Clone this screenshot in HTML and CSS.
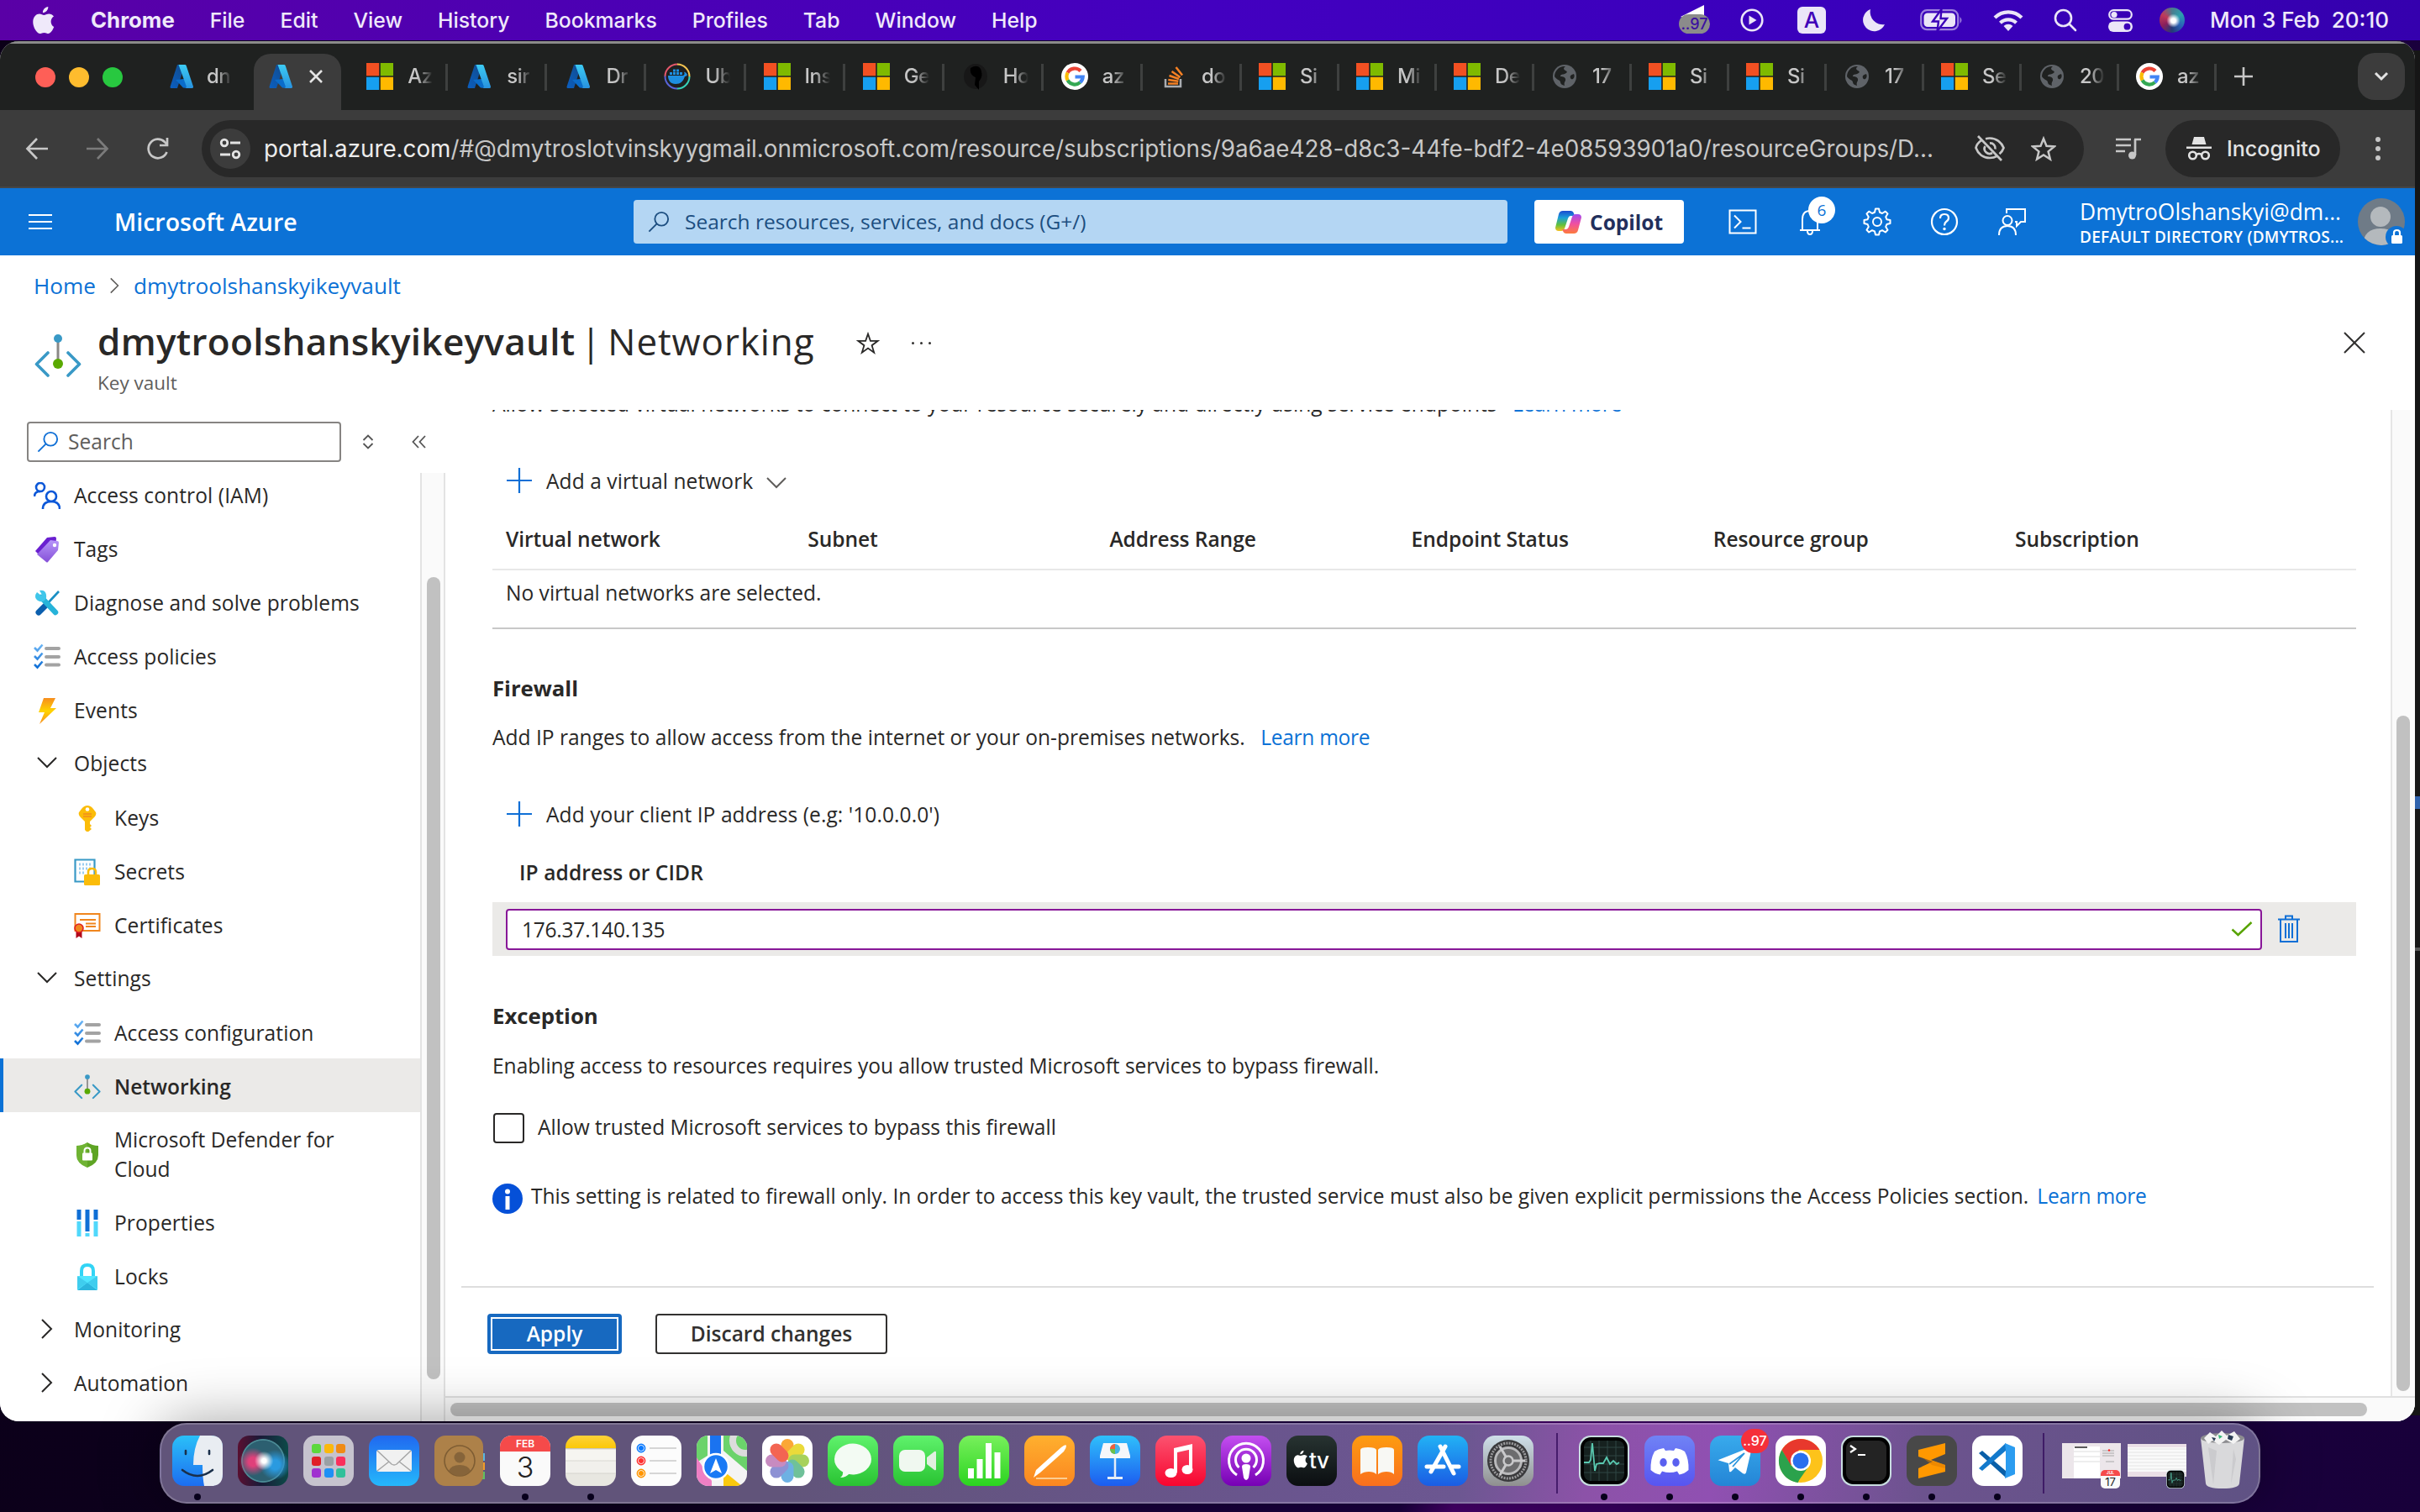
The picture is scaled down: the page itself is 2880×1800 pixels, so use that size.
FILE: index.html
```html
<!DOCTYPE html>
<html lang="en">
<head>
<meta charset="utf-8">
<title>dmytroolshanskyikeyvault - Microsoft Azure</title>
<link rel="stylesheet" href="styles.css">
</head>
<body>
<svg class="defs" width="0" height="0" aria-hidden="true">
  <defs>
    <linearGradient id="gAzA" x1="0" y1="1" x2="1" y2="0"><stop offset="0" stop-color="#0b5fc0"/><stop offset="1" stop-color="#114a8b"/></linearGradient>
    <linearGradient id="gAzB" x1="0" y1="0" x2="0" y2="1"><stop offset="0" stop-color="#3ccbf4"/><stop offset="1" stop-color="#2892df"/></linearGradient>
    <linearGradient id="gTag" x1="0" y1="0" x2="0" y2="1"><stop offset="0" stop-color="#b796f9"/><stop offset="1" stop-color="#8550d8"/></linearGradient>
    <linearGradient id="gBolt" x1="0" y1="0" x2="0" y2="1"><stop offset="0" stop-color="#f78d1e"/><stop offset=".5" stop-color="#ffd400"/><stop offset="1" stop-color="#f78d1e"/></linearGradient>
    <linearGradient id="gChk" x1="0" y1="0" x2="0" y2="1"><stop offset="0" stop-color="#6bb5f5"/><stop offset="1" stop-color="#0f6fd6"/></linearGradient>
    <linearGradient id="gCop1" x1="0" y1="0" x2="0" y2="1"><stop offset="0" stop-color="#1b4bd1"/><stop offset=".35" stop-color="#1ba0d8"/><stop offset=".7" stop-color="#63c13a"/><stop offset="1" stop-color="#f6c021"/></linearGradient>
    <linearGradient id="gCop2" x1="0" y1="0" x2="0" y2="1"><stop offset="0" stop-color="#a24bf0"/><stop offset=".5" stop-color="#f04fa0"/><stop offset="1" stop-color="#fd7b3c"/></linearGradient>
    <symbol id="azure" viewBox="0 0 32 32"><path fill="url(#gAzA)" d="M11 2h9L11 30H4.500Q2 30 2.600 28Z"/><path fill="#0a6cc9" d="M9 20l9 9.500 6 .5-5-11Z"/><path fill="url(#gAzB)" d="M12.500 2H20q1.300 0 1.800 1.400L30 28q.5 2-1.500 2H20.500q1.800-.5 1.200-2.500Z"/></symbol>
    <symbol id="ms" viewBox="0 0 32 32"><path fill="#f25022" d="M0 0h15.200v15.200H0z"/><path fill="#7fba00" d="M16.800 0H32v15.200H16.800z"/><path fill="#169ff0" d="M0 16.800h15.200V32H0z"/><path fill="#ffb900" d="M16.800 16.800H32V32H16.800z"/></symbol>
    <symbol id="google" viewBox="0 0 32 32"><circle cx="16" cy="16" r="16" fill="#fff"/><g fill="none" stroke-width="4.200"><path stroke="#ea4335" d="M23 9.500A9.600 9.600 0 0 0 7.600 11.500"/><path stroke="#fbbc05" d="M7.600 11.500a9.600 9.600 0 0 0 0 9"/><path stroke="#34a853" d="M7.600 20.500A9.600 9.600 0 0 0 22.500 23"/><path stroke="#4285f4" d="M22.500 23a9.600 9.600 0 0 0 3.200-6.500H16.500"/></g></symbol>
    <symbol id="globe" viewBox="0 0 32 32"><circle cx="16" cy="16" r="14" fill="#5f6368"/><path fill="#1f2120" d="M17 4c-3 2-2 4 0 5 3 1 2 3-1 4-2 1-5 0-5 3 3 0 7 1 6 5-1 2-2 3-1 6-3-1-5-2-5-4 0-3-5-3-7-7C4 9 10 3 17 4ZM27 13c-3 1-5 2-4 5 1 2 2 1 3 1 2-2 2-4 1-6Z"/></symbol>
    <symbol id="docker" viewBox="0 0 32 32"><circle cx="16" cy="16" r="14.500" fill="none" stroke="#e5576b" stroke-width="2" stroke-dasharray="23 100" transform="rotate(180 16 16)"/><circle cx="16" cy="16" r="14.500" fill="none" stroke="#f5c451" stroke-width="2" stroke-dasharray="23 100" transform="rotate(-90 16 16)"/><circle cx="16" cy="16" r="14.500" fill="none" stroke="#36d0b8" stroke-width="2" stroke-dasharray="23 100"/><circle cx="16" cy="16" r="14.500" fill="none" stroke="#5864d8" stroke-width="2" stroke-dasharray="23 100" transform="rotate(90 16 16)"/><path fill="#1d8fe0" d="M5 15h18c2-1 2-3 1-4 2-1 3 2 4 3-1 2-3 2-3 2-2 6-5 9-11 9-6 0-9-4-9-10ZM7 11h3v3H7zM11 11h3v3h-3zM15 11h3v3h-3zM19 11h3v3h-3zM11 7.500h3v3h-3zM15 7.500h3v3h-3z"/></symbol>
    <symbol id="hashi" viewBox="0 0 32 32"><ellipse cx="16" cy="16" rx="14" ry="15" fill="#171717"/><path fill="#000" d="M10 6q8-5 12 1c3 8 1 11-2 15v10l-5-6 1-9c-5-2-7-6-6-11Z"/></symbol>
    <symbol id="so" viewBox="0 0 32 32"><path fill="none" stroke="#a9adb1" stroke-width="2.500" d="M6 19v9h18v-9"/><path stroke="#f48024" stroke-width="2.600" d="M9 24.500h12M9.300 20l12 1.800M10.500 15l11.500 4M13.500 10l10 7M18.500 5l7.500 9.500"/></symbol>
    <symbol id="policies" viewBox="0 0 32 32"><path stroke="#a3a3a3" stroke-width="4" stroke-linecap="round" d="M15 6h15M15 16h15M15 25.500h15"/><path fill="none" stroke="url(#gChk)" stroke-width="2.600" d="M1 5l3.500 3.500 6-7M1 15l3.500 3.500 6-7M1 25l3.500 3.500 6-7"/></symbol>
    <symbol id="net" viewBox="0 0 56 56"><path stroke="#8a8886" stroke-width="3" d="M28 8v28"/><circle cx="28" cy="7" r="5" fill="#3999c6"/><circle cx="28" cy="37" r="6" fill="#59a900"/><path fill="none" stroke="#3999c6" stroke-width="3.600" stroke-linecap="round" stroke-linejoin="round" d="M16 24L2.500 37.500 16 51M40 24l13.500 13.500L40 51"/></symbol>
    <symbol id="down" viewBox="0 0 24 14"><path fill="none" stroke="currentColor" stroke-width="2" d="M1 1l11 11L23 1"/></symbol>
    <symbol id="right" viewBox="0 0 14 24"><path fill="none" stroke="currentColor" stroke-width="2" d="M1 1l11 11L1 23"/></symbol>
    <symbol id="plus" viewBox="0 0 30 30"><path fill="none" stroke="#0f6fd6" stroke-width="2.200" d="M15 0v30M0 15h30"/></symbol>
    <symbol id="mag" viewBox="0 0 28 28"><g fill="none" stroke="currentColor" stroke-width="2"><circle cx="17.500" cy="10.500" r="8.500"/><path d="M11.500 16.500L1.500 26.500"/></g></symbol>
    <symbol id="apple" viewBox="0 0 26 32"><path fill="currentColor" d="M18 1c.3 3.500-2.700 6.800-6 6.700C11.700 4.500 14.800 1.200 18 1ZM24.500 23.500C23 27.500 20.500 31 18.200 31c-1.800 0-2.500-1-4.700-1s-3 1-4.700 1C5.500 31 1 24 1 18c0-6 4-9 7.200-9 2 0 3.700 1.300 5.100 1.300 1.300 0 3.400-1.500 5.900-1.400 1.600.1 3.800.8 5.100 2.800-4.600 2.800-3.900 9.700.2 11.800Z"/></symbol>
    <symbol id="pulse" viewBox="0 0 60 60"><rect width="60" height="60" rx="14" fill="#c9dde0"/><rect x="2" y="2" width="56" height="56" rx="12.500" fill="#000"/><rect x="6" y="6" width="48" height="48" rx="8" fill="#16211f"/><path stroke="#2f4744" stroke-width="1" d="M14 6v48M24 6v48M34 6v48M44 6v48M6 14h48M6 24h48M6 34h48M6 44h48"/><path fill="none" stroke="#59c9b0" stroke-width="1.800" d="M6 32h6l2-3 2-20 3 33 2-8 4-1 4 0 4-7 4 8 4-4 4 4 3-2"/></symbol>
  </defs>
</svg>

<div class="desktop">
  <div class="behind"><i class="behind-mark"></i><i class="behind-line"></i></div>

  <header class="menubar">
    <nav class="menus">
      <svg class="apple" width="28" height="34"><use href="#apple"/></svg>
      <b>Chrome</b><span>File</span><span>Edit</span><span>View</span><span>History</span><span>Bookmarks</span><span>Profiles</span><span>Tab</span><span>Window</span><span>Help</span>
    </nav>
    <div class="status">
      <div class="st-tg"><svg width="37" height="36" viewBox="0 0 37 36"><path fill="#fff" d="M30 0L2 14l28 6Z"/><rect x="0" y="11" width="37" height="23" rx="11.500" fill="#8b8b8b"/></svg><em>..97</em></div>
      <svg class="st-play" width="28" height="28" viewBox="0 0 28 28"><circle cx="14" cy="14" r="12.300" fill="none" stroke="#ebe5f8" stroke-width="2.600"/><path fill="#ebe5f8" d="M10.500 8.500v11l9-5.500Z"/></svg>
      <div class="st-a">A</div>
      <svg class="st-moon" width="27" height="28" viewBox="0 0 27 28"><path fill="#ebe5f8" d="M9 1A15 15 0 0 0 26 19 13.500 13.500 0 1 1 9 1Z"/></svg>
      <svg class="st-bat" width="52" height="26" viewBox="0 0 52 26"><rect x="1.200" y="1.200" width="44" height="23" rx="7" fill="none" stroke="#9d80dd" stroke-width="2.200"/><rect x="4.500" y="4.500" width="37.500" height="16.500" rx="4.500" fill="#ebe5f8"/><path fill="#9d80dd" d="M47.500 9q4 4 0 8Z"/><path fill="#ebe5f8" stroke="#3b00b8" stroke-width="2.400" d="M25.500 0L15 14.500h7L20.500 26 32 11h-7.500Z"/></svg>
      <svg class="st-wifi" width="36" height="26" viewBox="0 0 36 26"><g fill="none" stroke="#ebe5f8" stroke-width="4.200"><path d="M2 10a22.500 22.500 0 0 1 32 0"/><path d="M8.500 16.300a13.500 13.500 0 0 1 19 0"/></g><path fill="#ebe5f8" d="M12.500 20a8 8 0 0 1 11 0L18 26Z"/></svg>
      <svg class="st-mag" width="28" height="28" viewBox="0 0 28 28"><g fill="none" stroke="#ebe5f8" stroke-width="2.600" stroke-linecap="round"><circle cx="11.500" cy="11.500" r="9.500"/><path d="M18.500 18.500L26 26"/></g></svg>
      <svg class="st-cc" width="29" height="27" viewBox="0 0 29 27"><rect x="1.200" y="1.200" width="26.600" height="10.500" rx="5.200" fill="none" stroke="#ebe5f8" stroke-width="2.200"/><circle cx="7" cy="6.500" r="3.600" fill="#ebe5f8"/><rect x="0" y="14.500" width="29" height="12.500" rx="6.200" fill="#ebe5f8"/><circle cx="22.500" cy="20.700" r="3.900" fill="#3b00b8"/></svg>
      <i class="st-siri"></i>
      <span class="date">Mon 3 Feb&nbsp; 20:10</span>
    </div>
  </header>

  <main class="window">
    <div class="tabstrip">
      <div class="lights"><i class="red"></i><i class="yel"></i><i class="grn"></i></div>
      <div class="tab nosep"><svg><use href="#azure"/></svg><span>dn</span></div>
      <div class="tab active"><svg><use href="#azure"/></svg><svg class="tab-x" viewBox="0 0 16 16"><path stroke="#e3e3e3" stroke-width="2.600" d="M1 1l14 14M15 1L1 15"/></svg></div>
      <div class="tab"><svg><use href="#ms"/></svg><span>Az</span></div>
      <div class="tab"><svg><use href="#azure"/></svg><span>sir</span></div>
      <div class="tab"><svg><use href="#azure"/></svg><span>Dr</span></div>
      <div class="tab"><svg><use href="#docker"/></svg><span>Ub</span></div>
      <div class="tab"><svg><use href="#ms"/></svg><span>Ins</span></div>
      <div class="tab"><svg><use href="#ms"/></svg><span>Ge</span></div>
      <div class="tab"><svg><use href="#hashi"/></svg><span>Ho</span></div>
      <div class="tab"><svg><use href="#google"/></svg><span>az</span></div>
      <div class="tab"><svg><use href="#so"/></svg><span>do</span></div>
      <div class="tab narrow"><svg><use href="#ms"/></svg><span>Si</span></div>
      <div class="tab narrow"><svg><use href="#ms"/></svg><span>Mi</span></div>
      <div class="tab narrow"><svg><use href="#ms"/></svg><span>De</span></div>
      <div class="tab narrow"><svg><use href="#globe"/></svg><span>17</span></div>
      <div class="tab narrow"><svg><use href="#ms"/></svg><span>Si</span></div>
      <div class="tab narrow"><svg><use href="#ms"/></svg><span>Si</span></div>
      <div class="tab narrow"><svg><use href="#globe"/></svg><span>17</span></div>
      <div class="tab narrow"><svg><use href="#ms"/></svg><span>Se</span></div>
      <div class="tab narrow"><svg><use href="#globe"/></svg><span>20</span></div>
      <div class="tab narrow"><svg><use href="#google"/></svg><span>az</span></div>
      <svg class="newtab" viewBox="0 0 22 22"><path stroke="#c7c7c7" stroke-width="2.600" d="M11 0v22M0 11h22"/></svg>
      <div class="tabmenu"><svg width="18" height="12" viewBox="0 0 18 12"><path fill="none" stroke="#e3e3e3" stroke-width="3" d="M2 2l7 7 7-7"/></svg></div>
    </div>

    <div class="toolbar">
      <svg class="tb-back" width="28" height="28" viewBox="0 0 28 28"><path fill="none" stroke="#c7c7c7" stroke-width="2.700" d="M27 14H3M14 2L2.500 14 14 26"/></svg>
      <svg class="tb-fwd" width="28" height="28" viewBox="0 0 28 28"><path fill="none" stroke="#7b7b7b" stroke-width="2.700" d="M1 14h24M14 2l11.500 12L14 26"/></svg>
      <svg class="tb-rel" width="28" height="28" viewBox="0 0 28 28"><path fill="none" stroke="#c7c7c7" stroke-width="2.700" d="M24.500 18A11.300 11.300 0 1 1 22 6l2.500 3"/><path fill="none" stroke="#c7c7c7" stroke-width="2.700" d="M25 1v9h-9"/></svg>
      <div class="omnibox">
        <div class="site"><svg width="26" height="26" viewBox="0 0 26 26"><g fill="none" stroke="#e3e3e3" stroke-width="2.800"><circle cx="6" cy="6" r="3.800"/><path d="M13 6h12M1 20h12"/><circle cx="20" cy="20" r="3.800"/></g></svg></div>
        <p class="url"><b>portal.azure.com</b>/#@dmytroslotvinskyygmail.onmicrosoft.com/resource/subscriptions/9a6ae428-d8c3-44fe-bdf2-4e08593901a0/resourceGroups/D...</p>
        <svg class="eye" width="36" height="32" viewBox="0 0 36 32"><g fill="none" stroke="#c7c7c7" stroke-width="2.700"><path d="M8 6C4.500 8.500 2 12 1.500 15 4 22 10 27 18 27q5 0 8.500-2.200M13 4.200Q15.500 3.500 18 3.500c8 0 14 5 16.500 11.500-1 3-2.800 5.500-5 7.300"/><path d="M12.500 13a6 6 0 0 0 8.500 8M18 9.500a6 6 0 0 1 6.500 7"/><path d="M4 1l28 29"/></g></svg>
        <svg class="star" width="30" height="30" viewBox="0 0 30 30"><path fill="none" stroke="#c7c7c7" stroke-width="2.500" d="M15 3l3.500 8.700 9.300.7-7.200 6 2.300 9.100L15 22.500l-7.900 5 2.300-9.100-7.200-6 9.300-.7Z"/></svg>
      </div>
      <svg class="media" width="32" height="26" viewBox="0 0 32 26"><g stroke="#c7c7c7" stroke-width="2.700"><path d="M1 2h18M1 9h18M1 16h11"/><path d="M24 2v19M23 2h8" /></g><circle cx="20.500" cy="21" r="4.500" fill="#c7c7c7"/></svg>
      <div class="incog"><svg width="30" height="28" viewBox="0 0 30 28"><path fill="#e3e3e3" d="M9 0h12l2.500 9h-17ZM0 11.500h30v2.500H0z"/><g fill="none" stroke="#e3e3e3" stroke-width="2.600"><circle cx="7.500" cy="22" r="4.300"/><circle cx="22.500" cy="22" r="4.300"/><path d="M12 21q3-2 6 0"/></g></svg><span>Incognito</span></div>
      <div class="kebab"><i></i><i></i><i></i></div>
    </div>

    <div class="azbar">
      <div class="burger"><i></i><i></i><i></i></div>
      <strong class="brand">Microsoft Azure</strong>
      <div class="azsearch"><svg width="28" height="26" viewBox="0 0 28 28"><use href="#mag"/></svg><span>Search resources, services, and docs (G+/)</span></div>
      <div class="copilot"><svg width="31" height="29" viewBox="0 0 31 29"><path fill="url(#gCop1)" d="M9 1h9q3 0 4 3l1 3h-5q-2 0-3 3l-4 12q-1 3-4 3H4q-4 0-4-4L4 5q1-4 5-4Z"/><path fill="url(#gCop2)" d="M22 28h-9q-3 0-4-3l-1-2h5q2 0 3-3l4-12q1-3 4-3h3q4 0 4 4l-4 15q-1 4-5 4Z"/></svg><b>Copilot</b></div>
      <div class="azicons">
        <svg viewBox="0 0 34 34"><g fill="none" stroke="#fff" stroke-width="2"><path d="M1.500 3.500h31v27h-31z"/><path d="M7 9.500l7.500 7.500L7 24.500M16.500 24.500h10"/></g></svg>
        <div class="bell"><svg viewBox="0 0 34 34"><g fill="none" stroke="#fff" stroke-width="2"><path d="M5 27h24M8 27V14q0-10 9-10t9 10v13M14 28q0 4 3 4t3-4"/></g></svg><em>6</em></div>
        <svg viewBox="0 0 34 34"><g fill="none" stroke="#fff" stroke-width="2"><circle cx="17" cy="17" r="5"/><path stroke-linejoin="round" d="M15 1.500h4l1 4.300 3 1.200 3.800-2.300 2.700 2.700-2.300 3.800 1.200 3 4.100.8v4l-4.100 1-1.200 3 2.300 3.800-2.700 2.700-3.800-2.300-3 1.200-1 4.100h-4l-1-4.100-3-1.200-3.800 2.300-2.700-2.700 2.300-3.800-1.200-3-4.100-1v-4l4.100-.8 1.200-3-2.300-3.800 2.700-2.700 3.800 2.300 3-1.200Z"/></g></svg>
        <svg viewBox="0 0 34 34"><g fill="none" stroke="#fff" stroke-width="2.200"><circle cx="17" cy="17" r="15"/><path d="M12 13q0-5 5-5t5 4.500q0 2.500-3 4.500-2 1.500-2 4.500"/></g><circle cx="17" cy="25.500" r="1.700" fill="#fff"/></svg>
        <svg viewBox="0 0 34 34"><g fill="none" stroke="#fff" stroke-width="2"><path d="M11 7V2h22v15h-5l-5 5v-5h-2"/><circle cx="12" cy="15.500" r="5.500"/><path d="M2 33q0-11 10-11t10 11"/></g></svg>
      </div>
      <div class="account"><span>DmytroOlshanskyi@dm...</span><small>DEFAULT DIRECTORY (DMYTROS...</small></div>
      <div class="avatar"><svg width="56" height="56" viewBox="0 0 56 56"><clipPath id="cAv"><circle cx="28" cy="28" r="28"/></clipPath><g clip-path="url(#cAv)"><rect width="56" height="56" fill="#6f7b87"/><circle cx="27" cy="22" r="12" fill="#b4b9bd"/><path fill="#b4b9bd" d="M6 58q0-22 21-22t21 22Z"/></g><circle cx="46" cy="46" r="13" fill="#0c72d6"/><rect x="40" y="44" width="13" height="10" rx="1.500" fill="#fff"/><path fill="none" stroke="#fff" stroke-width="2.200" d="M43 45v-4q0-3 3.500-3t3.500 3v4"/></svg></div>
    </div>

    <div class="portal">
      <div class="crumbs"><a>Home</a><svg width="11" height="20" viewBox="0 0 14 24"><use href="#right"/></svg><a>dmytroolshanskyikeyvault</a></div>
      <div class="head">
        <svg class="headicon" width="56" height="56"><use href="#net"/></svg>
        <div class="headtext">
          <h1><b>dmytroolshanskyikeyvault</b> <span>| Networking</span></h1>
          <p>Key vault</p>
        </div>
        <svg class="fav" width="28" height="28" viewBox="0 0 28 28"><path fill="none" stroke="#292827" stroke-width="1.800" d="M14 2.500l2.900 8.300h8.900l-7.200 5.400 2.600 8.600-7.200-5.200-7.200 5.200 2.600-8.600-7.200-5.400h8.900Z"/></svg>
        <div class="more"><i></i><i></i><i></i></div>
        <svg class="close" width="26" height="26" viewBox="0 0 26 26"><path stroke="#323130" stroke-width="2" d="M1 1l24 24M25 1L1 25"/></svg>
      </div>

      <div class="body">
        <aside class="side">
          <div class="sidesearch">
            <div class="box"><svg width="26" height="26" viewBox="0 0 28 28"><use href="#mag"/></svg><span>Search</span></div>
            <svg class="updown" width="14" height="18" viewBox="0 0 14 18"><path fill="none" stroke="#555" stroke-width="1.800" d="M1.500 7L7 1.500 12.500 7M1.500 11L7 16.500 12.500 11"/></svg>
            <svg class="collapse" width="17" height="16" viewBox="0 0 17 16"><path fill="none" stroke="#555" stroke-width="1.800" d="M8 1L1.500 8 8 15M16 1L9.500 8 16 15"/></svg>
          </div>
          <div class="sidebody">
            <ul class="nav">
              <li><svg viewBox="0 0 32 32"><g fill="none" stroke="#0b57d8" stroke-width="2.600"><circle cx="8" cy="6" r="5"/><path d="M1 17q0-6 7-6"/><circle cx="21" cy="17" r="6"/><path d="M11 32q0-9 10-9t10 9"/></g></svg><span>Access control (IAM)</span></li>
              <li><svg viewBox="0 0 32 32"><path fill="#6a1fd0" d="M16 2l9-1q2 0 2 2l-1 10L11 27 2 18Z"/><path fill="url(#gTag)" d="M20 5l8 1q2 0 2 2l-1 9L17 31q-1 1-2 0l-11-9Z"/><circle cx="25" cy="11" r="2.200" fill="#fff"/></svg><span>Tags</span></li>
              <li><svg viewBox="0 0 32 32"><path stroke="#1a8fc4" stroke-width="2.600" d="M30 2L16 17"/><path stroke="#0b5fae" stroke-width="7" stroke-linecap="round" d="M14 19L6 27"/><path stroke="#26b3d9" stroke-width="6.500" stroke-linecap="round" d="M9 9l17 18"/><path fill="#3fc6ea" d="M4 3l5 4 1-1-3-5q7-1 8 5t-4 8q-7 1-9-5 0-4 2-6Z"/></svg><span>Diagnose and solve problems</span></li>
              <li><svg><use href="#policies"/></svg><span>Access policies</span></li>
              <li><svg viewBox="0 0 32 32"><path fill="url(#gBolt)" d="M12 1h14l-6 12h7L7 32l6-14H6Z"/></svg><span>Events</span></li>
              <li class="group"><svg class="cdown"><use href="#down"/></svg><span>Objects</span></li>
              <li class="sub"><svg viewBox="0 0 32 32"><path fill="#fbbc09" d="M16 1q4 0 7 4l3 4q1 2-1 5l-6 6v3l2 2-2 2 2 2-5 4-3-3V20L7 14q-2-3-1-5l3-4q3-4 7-4Z"/><circle cx="16" cy="5.500" r="2.300" fill="#fff"/><path stroke="#f28a1c" stroke-width="1.500" d="M11 11h10M11 14h10"/></svg><span>Keys</span></li>
              <li class="sub"><svg viewBox="0 0 32 32"><path fill="#fff" stroke="#3999c6" stroke-width="2.200" d="M1.500 1.500h23v26h-23z"/><path fill="none" stroke="#9bcdf0" stroke-width="3" stroke-dasharray="2 2" d="M6 7h14M6 12h14M6 17h8"/><path fill="none" stroke="#fbbc09" stroke-width="2.600" d="M17 20v-4q0-4 4.500-4t4.500 4v4"/><rect x="12" y="19" width="19" height="13" rx="1.500" fill="#fbbc09"/></svg><span>Secrets</span></li>
              <li class="sub"><svg viewBox="0 0 32 32"><path fill="#fff" stroke="#f0861e" stroke-width="2" d="M1.500 2h29v20h-29z"/><path stroke="#f0861e" stroke-width="1.800" d="M7 9h19M14 13.500h12M14 17h12"/><path fill="#b0081a" d="M2.500 22h7v9l-3.500-2.500L2.500 31Z"/><circle cx="6" cy="19" r="5" fill="#f0861e" stroke="#e02020" stroke-width="1.600"/></svg><span>Certificates</span></li>
              <li class="group"><svg class="cdown"><use href="#down"/></svg><span>Settings</span></li>
              <li class="sub"><svg><use href="#policies"/></svg><span>Access configuration</span></li>
              <li class="sub sel"><svg viewBox="0 0 56 56"><use href="#net"/></svg><span>Networking</span></li>
              <li class="sub tall"><svg viewBox="0 0 32 32"><path fill="#5ea424" d="M16 1q6 4 13 4v11q0 10-13 15Q3 26 3 16V5q7 0 13-4Z"/><path fill="#7fc241" d="M16 1v30Q3 26 3 16V5q7 0 13-4Z" opacity=".5"/><rect x="10" y="13.500" width="12" height="9" rx="1" fill="#fff"/><path fill="none" stroke="#fff" stroke-width="2" d="M12.500 14v-3q0-3.500 3.500-3.500t3.500 3.500v3"/></svg><span>Microsoft Defender for Cloud</span></li>
              <li class="sub"><svg viewBox="0 0 32 32"><path fill="#0f6fd6" d="M3.500 0h5v12h-5zM13.500 0h5v26h-5zM23.500 0h5v12h-5z"/><path fill="#50d8fb" d="M3.500 14h5v18h-5zM13.500 28h5v4h-5zM23.500 14h5v18h-5z"/></svg><span>Properties</span></li>
              <li class="sub"><svg viewBox="0 0 32 32"><path fill="none" stroke="#32d4f5" stroke-width="4" d="M9 16V9q0-7 7-7t7 7v7"/><rect x="4" y="15" width="24" height="17" rx="1.500" fill="#50e6ff"/><path fill="#2cb5dd" d="M4 32l12-9 12 9Z"/><path fill="#3fcdee" d="M4 15l12 8L4 31ZM28 15l-12 8 12 8Z"/></svg><span>Locks</span></li>
              <li class="group"><svg class="cright"><use href="#right"/></svg><span>Monitoring</span></li>
              <li class="group"><svg class="cright"><use href="#right"/></svg><span>Automation</span></li>
            </ul>
            <div class="sidescroll"><i></i></div>
          </div>
        </aside>

        <section class="pane">
          <div class="pane-row">
            <div class="content">
              <p class="intro">Allow selected virtual networks to connect to your resource securely and directly using service endpoints <a>Learn more</a></p>
              <div class="cmd c1"><svg width="30" height="30"><use href="#plus"/></svg><span>Add a virtual network</span><svg class="cv" width="24" height="14"><use href="#down"/></svg></div>
              <div class="thead"><span>Virtual network</span><span>Subnet</span><span>Address Range</span><span>Endpoint Status</span><span>Resource group</span><span>Subscription</span></div>
              <div class="trow">No virtual networks are selected.</div>
              <h3 class="firewall">Firewall</h3>
              <p class="fw-desc">Add IP ranges to allow access from the internet or your on-premises networks. <a>Learn more</a></p>
              <div class="cmd c2"><svg width="30" height="30"><use href="#plus"/></svg><span>Add your client IP address (e.g: '10.0.0.0')</span></div>
              <label class="iplabel">IP address or CIDR</label>
              <div class="iprow">
                <div class="input"><span>176.37.140.135</span><svg width="26" height="18" viewBox="0 0 26 18"><path fill="none" stroke="#57a300" stroke-width="2.400" d="M1.500 9.500L8.500 16 24.500 1"/></svg></div>
                <svg class="trash" width="26" height="34" viewBox="0 0 26 34"><g fill="none" stroke="#0f6fd6" stroke-width="2"><path d="M0 5.500h26M3 6v26h20V6M9 5V1.500h8V5M9 10v18M13 10v18M17 10v18"/></g></svg>
              </div>
              <h3 class="exception">Exception</h3>
              <p class="ex-desc">Enabling access to resources requires you allow trusted Microsoft services to bypass firewall.</p>
              <div class="check"><i></i><span>Allow trusted Microsoft services to bypass this firewall</span></div>
              <div class="info"><svg width="36" height="36" viewBox="0 0 36 36"><circle cx="18" cy="18" r="18" fill="#0550d8"/><circle cx="18" cy="9.500" r="3" fill="#fff"/><path fill="#fff" d="M15.500 15h5v16h-5z"/></svg><span>This setting is related to firewall only. In order to access this key vault, the trusted service must also be given explicit permissions the Access Policies section.</span><a>Learn more</a></div>
              <div class="actions"><button class="apply">Apply</button><button class="discard">Discard changes</button></div>
            </div>
            <div class="vscroll"><i></i></div>
          </div>
          <div class="hscroll"><i></i></div>
        </section>
      </div>
    </div>
  </main>

  <footer class="dock">
    <div class="app run"><svg viewBox="0 0 60 60"><defs><linearGradient id="d1" x1="0" y1="0" x2="0" y2="1"><stop offset="0" stop-color="#2ac0f8"/><stop offset="1" stop-color="#1c6df0"/></linearGradient></defs><rect width="60" height="60" rx="14" fill="url(#d1)"/><path fill="#e9edf2" d="M33 0h13q14 0 14 14v32q0 14-14 14h-8q-2-10-2-25h-11Q25 15 33 0Z"/><path stroke="#1a2f4a" stroke-width="2.600" stroke-linecap="round" fill="none" d="M16 18v4M44 18v4M12 41q18 14 36 0"/></svg></div>
    <div class="app siri"></div>
    <div class="app pad"><i></i><i></i><i></i><i></i><i></i><i></i><i></i><i></i><i></i></div>
    <div class="app mail"><svg viewBox="0 0 60 60"><rect x="9" y="17" width="42" height="26" rx="3" fill="#f1f1f1"/><path fill="none" stroke="#a5a5a5" stroke-width="1.500" d="M10 18l17 16q3 2 6 0l17-16M10 42l14-11M50 42L36 31"/></svg></div>
    <div class="app contacts"><svg viewBox="0 0 60 60"><path fill="#59b7e0" d="M56 21h5v9h-5z"/><path fill="#f09a2a" d="M56 32h5v9h-5z"/><path fill="#60c060" d="M56 43h4v9h-4z"/><rect width="58" height="60" rx="13" fill="#ad8149"/><g fill="none" stroke="#7e5d33" stroke-width="1.600"><circle cx="30" cy="30" r="18"/></g><circle cx="30" cy="26" r="6.500" fill="#86643a"/><path fill="#86643a" d="M17 42q3-7 13-7t13 7q-6 6-13 6t-13-6Z"/></svg></div>
    <div class="app cal run"><b>FEB</b><span>3</span></div>
    <div class="app notes run"></div>
    <div class="app rem"><svg viewBox="0 0 60 60"><path stroke="#c9c9c9" stroke-width="1.600" d="M22 15h32M22 30h32M22 45h32"/><g stroke-width="1.600" fill="none"><circle cx="12" cy="15" r="4.600" stroke="#0a7aff"/><circle cx="12" cy="30" r="4.600" stroke="#ff3030"/><circle cx="12" cy="45" r="4.600" stroke="#ff9500"/></g><circle cx="12" cy="15" r="3" fill="#0a7aff"/><circle cx="12" cy="30" r="3" fill="#ff3030"/><circle cx="12" cy="45" r="3" fill="#ff9500"/></svg></div>
    <div class="app maps"><svg viewBox="0 0 60 60"><clipPath id="cM"><rect width="60" height="60" rx="14"/></clipPath><g clip-path="url(#cM)"><rect width="60" height="60" fill="#f4f4f4"/><path fill="#6bd36b" d="M0 0h13v24L0 32ZM32 0h28v42L32 18Z"/><path fill="#ee7fc4" d="M0 26l18 28v6H0Z"/><path fill="#fbc90e" d="M32 60h22L32 42Z"/><circle cx="58" cy="6" r="15" fill="none" stroke="#dcdcdc" stroke-width="8"/><path fill="#1a73f0" d="M16 0h13v30H16z"/><circle cx="23" cy="37" r="15" fill="#1a7af5" stroke="#fff" stroke-width="2.500"/><path fill="#fff" d="M23 27l7 18-7-4-7 4Z"/></g></svg></div>
    <div class="app photos"><svg viewBox="0 0 60 60"><g opacity=".88"><rect x="22.500" y="4" width="15" height="25" rx="7.500" fill="#fb9b1b"/><rect x="22.500" y="4" width="15" height="25" rx="7.500" fill="#e8d51f" transform="rotate(45 30 30)"/><rect x="22.500" y="4" width="15" height="25" rx="7.500" fill="#9ccb45" transform="rotate(90 30 30)"/><rect x="22.500" y="4" width="15" height="25" rx="7.500" fill="#5cb98b" transform="rotate(135 30 30)"/><rect x="22.500" y="4" width="15" height="25" rx="7.500" fill="#5aa7e0" transform="rotate(180 30 30)"/><rect x="22.500" y="4" width="15" height="25" rx="7.500" fill="#7f83cf" transform="rotate(225 30 30)"/><rect x="22.500" y="4" width="15" height="25" rx="7.500" fill="#c07cb8" transform="rotate(270 30 30)"/><rect x="22.500" y="4" width="15" height="25" rx="7.500" fill="#f2503b" transform="rotate(315 30 30)"/></g></svg></div>
    <div class="app green"><svg viewBox="0 0 60 60"><ellipse cx="30" cy="28" rx="22" ry="18.500" fill="#f3fbf3"/><path fill="#f3fbf3" d="M18 42q1 5-3 8 7 0 11-5Z"/></svg></div>
    <div class="app green"><svg viewBox="0 0 60 60"><rect x="7" y="17" width="31" height="26" rx="7" fill="#f0f8f0"/><path fill="#e0efe0" d="M40 26l9-7q2-1 2 1v20q0 2-2 1l-9-7Z"/></svg></div>
    <div class="app green2"><svg viewBox="0 0 60 60"><path fill="#fff" d="M11 39h7v12h-7zM21.500 28h7v23h-7zM32 9h7v42h-7zM42.500 20h7v31h-7z"/></svg></div>
    <div class="app pages"><svg viewBox="0 0 60 60"><path stroke="#fde3b8" stroke-width="1.600" d="M14 51h37"/><path fill="#fff" d="M11 50l3-9 30-27q5-4 6-2 0 3-3 7L19 44Z"/></svg></div>
    <div class="app keynote"><svg viewBox="0 0 60 60"><path stroke="#e6eef7" stroke-width="2.500" d="M30 27v23"/><path fill="#e6eef7" d="M21 49h18v3H21z"/><path fill="#f5f7fa" d="M16 9h28l4 15v3H12v-3Z"/><circle cx="30" cy="16" r="6" fill="#42b4e8"/><path fill="#f2603b" d="M30 16v-6a6 6 0 0 0-6 6Z"/><path fill="#6cc04a" d="M30 16h-6a6 6 0 0 0 6 6Z"/></svg></div>
    <div class="app music"><svg viewBox="0 0 60 60"><path fill="#fff" d="M22 15l22-5v6l-18 4v24h-4ZM40 12h4v28h-4Z"/><ellipse cx="18.500" cy="44.500" rx="7" ry="5.500" fill="#fff"/><ellipse cx="38" cy="40.500" rx="6.500" ry="5.500" fill="#fff"/></svg></div>
    <div class="app pod"><svg viewBox="0 0 60 60"><g fill="none" stroke="#fff" stroke-width="3"><path d="M19 47a20.500 20.500 0 1 1 22 0"/><path d="M21.500 38a12.500 12.500 0 1 1 17 0"/></g><circle cx="30" cy="27" r="5.500" fill="#fff"/><path fill="#fff" d="M25 37q0-3 5-3t5 3l-2 13q-1 3-3 3t-3-3Z"/></svg></div>
    <div class="app tv"><svg width="17" height="21" viewBox="0 0 26 32"><use href="#apple"/></svg><span>tv</span></div>
    <div class="app books"><svg viewBox="0 0 60 60"><path fill="#f8f8f4" d="M10 17q0-3 9-3t10 3v29q-3-3-9-3t-10 3ZM31 17q1-3 10-3t9 3v29q-3-3-9-3t-10 3Z"/></svg></div>
    <div class="app store"><svg viewBox="0 0 60 60"><g stroke="#fff" stroke-width="5" stroke-linecap="round" fill="none"><path d="M33 13L16 43M27 13l16 32M11 37h20M41 37h8"/></g></svg></div>
    <div class="app prefs"><svg viewBox="0 0 60 60"><circle cx="30" cy="30" r="25" fill="#3a3a3c"/><circle cx="30" cy="30" r="21" fill="none" stroke="#9a9a9c" stroke-width="3" stroke-dasharray="2 1.300"/><circle cx="30" cy="30" r="15.500" fill="#6c6c6e" stroke="#b9b9bb" stroke-width="3"/><circle cx="30" cy="30" r="5.500" fill="none" stroke="#c9c9cb" stroke-width="2.500"/><path stroke="#c9c9cb" stroke-width="3" d="M36 30h14M27 25L20 13M27 35l-7 12"/></svg></div>
    <i class="sep s1"></i>
    <div class="app run"><svg viewBox="0 0 60 60"><use href="#pulse"/></svg></div>
    <div class="app discord run"><svg viewBox="0 0 60 60"><path fill="#fff" d="M23 15q-7 1-11 4-5 9-4.500 22 5 4.500 11 5.500l2.500-4q9 3 18 0l2.500 4q6-1 11-5.500Q53 28 48 19q-4-3-11-4l-2 3q-5-1-10 0Z"/><ellipse cx="22.500" cy="32" rx="4.200" ry="5" fill="#5a60f0"/><ellipse cx="37.500" cy="32" rx="4.200" ry="5" fill="#5a60f0"/></svg></div>
    <div class="app tg run"><svg viewBox="0 0 60 60"><path fill="#fff" d="M10 29L48 14q2 0 1.500 2L43 44q-1 3-4 1l-9-7-5 5q-2 1-2-1l-1-9-10-3q-4-1-2-1Z"/><path fill="none" stroke="#2b95dd" stroke-width="1.800" d="M23 34l18-13-14 16"/></svg><em>..97</em></div>
    <div class="app chrome run"><svg viewBox="0 0 60 60"><circle cx="30" cy="30" r="26" fill="#fdc31a"/><path fill="#e8382d" d="M7.500 17A26 26 0 0 1 52.500 17H28L18 36Z"/><path fill="#2ba24c" d="M7.500 17L19 36.500 30 43l-3 13A26 26 0 0 1 7.500 17Z"/><path fill="#2ba24c" d="M26 56l14-20-9-2-12 2Z"/><circle cx="30" cy="30" r="12" fill="#fff"/><circle cx="30" cy="30" r="9.500" fill="#2a6fee"/></svg></div>
    <div class="app term run"><svg viewBox="0 0 60 60"><rect width="60" height="60" rx="14" fill="#c9dde0"/><rect x="2" y="2" width="56" height="56" rx="12.500" fill="#000"/><rect x="6" y="6" width="48" height="48" rx="9" fill="#232323"/><path fill="none" stroke="#fff" stroke-width="2.200" d="M11 12l6 4-6 4M20 23h9"/></svg></div>
    <div class="app sublime run"><svg viewBox="0 0 60 60"><path fill="#ff9800" d="M46 9v13l-17 7 17 6v8L14 51V39l17-8-17-6v-8Z"/><path fill="#d97900" d="M20 27l26 8v4l-16-4Z" opacity=".5"/></svg></div>
    <div class="app vs run"><svg viewBox="0 0 60 60"><path fill="#0a5fa8" d="M8 21l4-3 28 24v8Z"/><path fill="#1279cc" d="M8 39l4 3 28-24V9Z"/><path fill="#2b9cf0" d="M39 9l12 5v32l-12 5 1-8V17Z"/></svg></div>
    <i class="sep s2"></i>
    <div class="mini"><svg viewBox="0 0 70 46"><rect width="70" height="42" fill="#ece6ea"/><path fill="#fff" d="M14 4h31v38H14z"/><path stroke="#ddd" d="M14 10h31M14 16h31M14 22h31"/><path stroke="#333" stroke-width="1.600" d="M15 5h15"/><path stroke="#999" stroke-width=".8" d="M48 9h14M48 12h14M48 15h14M52 22h10"/><circle cx="56" cy="8.500" r="1.200" fill="#f22"/></svg><div class="cal17"><b>JUL</b><span>17</span></div></div>
    <div class="mini"><svg viewBox="0 0 70 46"><rect y="1" width="70" height="39" fill="#fafafa"/><path stroke="#e4e4e4" d="M0 7h70M0 11h70M0 15h70M0 19h70M0 23h70M0 27h70M0 31h70"/><path fill="#eadfe6" d="M0 1h70v4H0zM0 34h70v6H0z"/></svg><svg class="mini-act" viewBox="0 0 60 60"><use href="#pulse"/></svg></div>
    <svg class="bin" viewBox="0 0 54 70"><path fill="#d9d9db" d="M1 9q26 8 52 0l-6 54q-1 6-20 6T7 63Z"/><path fill="#c2c2c5" d="M10 20l6 44 4-40ZM40 22l-3 42 6-30Z" opacity=".6"/><ellipse cx="27" cy="9" rx="26" ry="6" fill="#8d8d90"/><path fill="#f3f3f3" d="M5 9l7-7 7 5 7-7 6 6 9-5 7 9-8 6-9-5-8 6-8-5-5 4Z"/><path fill="#2b3d55" d="M34 5l6 2-2 5-5-2ZM14 8l5 1-2 4Z"/><path fill="#35b878" d="M22 5l5 2-4 3Z"/></svg>
  </footer>
</div>
</body>
</html>
```
FILE: styles.css
```css
* { box-sizing: border-box; }
body { margin: 0; width: 2880px; height: 1800px; overflow: hidden; font-family: "Open Sans", "Noto Sans", sans-serif; font-size: 24.550px; color: #292827; }
i { font-style: normal; display: block; }
em { font-style: normal; }
p, h1, h3, ul { margin: 0; padding: 0; font-weight: 400; }
svg { display: block; flex: none; }
.defs { position: absolute; }
a { color: #0c72d6; }

.desktop { position: relative; width: 2880px; height: 1800px; overflow: hidden; display: flex; flex-direction: column; background: linear-gradient(100deg, #0b0018 0%, #0e0020 35%, #18003c 48%, #1b0042 62%, #4a0070 64%, #3c0066 70%, #1c0040 78%, #18003a 100%); }
.behind { position: absolute; right: 0; top: 60px; width: 60px; height: 1625px; background: #161616; border-radius: 0 0 0 20px; }
.behind-mark { position: absolute; right: 0; top: 888px; width: 8px; height: 15px; background: #2f62ad; }
.behind-line { position: absolute; right: 0; top: 1068px; width: 8px; height: 4px; background: #555; }

/* macOS menu bar */
.menubar { flex: none; height: 48px; display: flex; justify-content: space-between; align-items: center; background: linear-gradient(90deg, #5a00a6, #4c00b4 25%, #4300c0 50%, #3a00bc 75%, #3500ae); color: #efe9fa; font: 500 24.800px/46px Inter, sans-serif; padding: 0 37px 0 38px; }
.menus { display: flex; align-items: center; gap: 42px; }
.menus b { font-weight: 700; font-size: 25.800px; }
.status { display: flex; align-items: center; }
.st-tg { position: relative; width: 37px; height: 36px; }
.st-tg em { position: absolute; left: 0; top: 12px; width: 37px; text-align: center; font: 500 18px/22px Inter; color: #3b10a0; }
.st-play { margin-left: 36px; }
.st-a { margin-left: 40px; width: 34px; height: 32px; border-radius: 6px; background: #ebe5f8; color: #4000b8; text-align: center; font: 500 26px/32px Inter; }
.st-moon { margin-left: 44px; }
.st-bat { margin-left: 41px; }
.st-wifi { margin-left: 35px; }
.st-mag { margin-left: 36px; }
.st-cc { margin-left: 37px; }
.st-siri { margin-left: 32px; width: 30px; height: 30px; border-radius: 50%; background: radial-gradient(circle at 55% 52%, #fff 0 12%, rgba(255,255,255,0) 36%), conic-gradient(#4b7c8e, #2b9fae, #2a63b8, #233a78, #8b1f5c, #c03a5a, #4b7c8e); }
.date { margin-left: 30px; white-space: nowrap; font-size: 26px; }

/* browser window */
.window { position: relative; margin-top: 1px; width: 2874px; height: 1643px; border-radius: 22px; overflow: hidden; background: #fff; display: flex; flex-direction: column; }
.tabstrip { flex: none; height: 82px; background: #1f2120; border-top: 3px solid #8b8b8b; display: flex; align-items: center; color: #c7c7c7; }
.lights { width: 178px; display: flex; gap: 16px; padding-left: 42px; }
.lights i { width: 24px; height: 24px; border-radius: 50%; }
.red { background: #fe5f57; }
.yel { background: #febc2e; }
.grn { background: #28c840; }
.tab { position: relative; flex: none; width: 118.100px; height: 32px; padding-left: 22px; display: flex; align-items: center; margin-top: -2px; }
.tab.narrow { width: 116px; padding-left: 21px; }
.tab svg { width: 32px; height: 32px; }
.tab span { margin-left: 17px; width: 38px; white-space: nowrap; font: 500 24px/32px Inter; letter-spacing: -.5px; -webkit-mask-image: linear-gradient(90deg, #000 12px, transparent 30px); mask-image: linear-gradient(90deg, #000 12px, transparent 30px); }
.tab::after { content: ""; position: absolute; right: -1px; top: 1px; width: 3px; height: 32px; background: #3e403f; }
.nosep::after, .active::after { display: none; }
.nosep span { margin-left: 14px; }
.active::before { content: ""; position: absolute; left: 6px; top: -11px; width: 104px; height: 69px; background: #3c3c3c; border-radius: 20px 20px 0 0; }
.tab.active svg { position: relative; }
.tab.active .tab-x { width: 16px; height: 16px; margin-left: 18px; }
.newtab { width: 22px; height: 22px; margin-left: 22px; margin-top: -2px; }
.tabmenu { margin-left: auto; margin-right: 12px; margin-top: -2px; width: 56px; height: 56px; border-radius: 20px; background: #3c3c3c; display: flex; align-items: center; justify-content: center; }
.toolbar { flex: none; height: 93px; background: #3c3c3c; border-bottom: 2px solid #464646; display: flex; align-items: center; padding-left: 30px; }
.tb-fwd { margin-left: 44px; }
.tb-rel { margin-left: 44px; }
.omnibox { margin-left: 38px; width: 2240px; height: 68px; border-radius: 34px; background: #282828; display: flex; align-items: center; padding-left: 10px; }
.site { width: 48px; height: 48px; border-radius: 50%; background: #3c3c3c; display: flex; align-items: center; justify-content: center; }
.url { margin-left: 16px; width: 2021px; white-space: nowrap; font: 400 27.780px/40px Inter; color: #c7c7c7; }
.url b { font-weight: 400; color: #ececec; }
.eye { margin-left: 15px; }
.star { margin-left: 31px; }
.media { margin-left: 37px; }
.incog { margin-left: 28px; width: 208px; height: 68px; border-radius: 34px; background: #282828; display: flex; align-items: center; padding-left: 25px; gap: 18px; font: 500 25px/40px Inter; color: #e3e3e3; }
.kebab { margin-left: 42px; display: grid; gap: 5px; }
.kebab i { width: 6px; height: 6px; border-radius: 50%; background: #c7c7c7; }

/* portal header */
.azbar { flex: none; height: 80px; background: #0c72d6; display: flex; align-items: center; color: #fff; padding-left: 34px; }
.burger { width: 28px; display: grid; gap: 6px; }
.burger i { height: 2px; background: #fff; }
.brand { margin-left: 74px; width: 618px; font-weight: 600; font-size: 28.500px; white-space: nowrap; }
.azsearch { width: 1040px; height: 52px; border-radius: 4px; background: #b4d6f3; color: #1c4e80; display: flex; align-items: center; padding-left: 16px; gap: 17px; white-space: nowrap; font-size: 24.500px; }
.azsearch span { margin-bottom: 2px; }
.copilot { margin-left: 32px; width: 178px; height: 52px; border-radius: 4px; background: #fff; color: #222f5c; display: flex; align-items: center; padding-left: 25px; gap: 10px; }
.copilot b { font-weight: 700; }
.azicons { margin-left: 30px; display: flex; }
.azicons svg { width: 34px; height: 34px; }
.azicons > * { margin: 0 23px; }
.bell { position: relative; }
.bell em { position: absolute; left: 15px; top: -13px; width: 32px; height: 32px; border-radius: 50%; background: #fff; color: #0c72d6; text-align: center; font-size: 19px; line-height: 32px; }
.account { margin-left: 41px; width: 331px; display: flex; flex-direction: column; white-space: nowrap; padding-top: 3px; }
.account span { line-height: 34px; font-size: 26.400px; }
.account small { font-size: 19px; line-height: 27px; font-weight: 600; letter-spacing: .2px; }

/* blade heading */
.portal { flex: 1; display: flex; flex-direction: column; background: #fff; min-height: 0; }
.crumbs { height: 72px; padding: 0 0 1px 40px; display: flex; align-items: center; gap: 17px; color: #605e5c; font-size: 26.200px; }
.head { height: 112px; display: flex; padding-left: 41px; align-items: flex-start; }
.headicon { margin-top: 20px; }
.headtext { margin-left: 19px; width: 897px; white-space: nowrap; }
.headtext h1 { font-size: 44px; line-height: 61px; word-spacing: -5px; }
.headtext b { font-weight: 600; letter-spacing: .3px; }
.headtext h1 span { letter-spacing: .9px; }
.headtext p { margin-top: 4px; font-size: 22.500px; line-height: 30px; color: #605e5c; }
.fav { margin-top: 19px; margin-left: 6px; }
.more { margin: 31px 0 0 38px; display: flex; gap: 7px; }
.more i { width: 3px; height: 3px; background: #323130; border-radius: 50%; }
.close { margin: 19px 59px 0 auto; }
.body { flex: 1; display: flex; min-height: 0; }

/* resource menu */
.side { width: 530px; display: flex; flex-direction: column; }
.sidesearch { flex: none; height: 68px; display: flex; align-items: center; padding-left: 32px; }
.sidesearch .box { margin-top: 7px; width: 374px; height: 48px; border: 2px solid #868482; border-radius: 4px; display: flex; align-items: center; padding-left: 10px; gap: 11px; color: #0f6fd6; }
.sidesearch .box span { color: #605e5c; }
.updown { margin: 7px 0 0 25px; }
.collapse { margin: 7px 0 0 45px; }
.sidebody { flex: 1; display: flex; min-height: 0; }
.nav { flex: none; width: 500px; list-style: none; letter-spacing: .1px; }
.nav li { height: 64px; padding: 4px 0 0 40px; display: flex; align-items: center; }
.nav li svg { width: 32px; height: 32px; }
.nav li span { margin-left: 16px; margin-bottom: 2px; }
.nav .group { padding-top: 0; }
.nav .group span { margin-bottom: 0; }
.nav .group .cdown { width: 24px; height: 14px; margin: 0 4px; }
.nav .group .cright { width: 14px; height: 24px; margin: 0 9px; }
.nav .sub { padding-left: 88px; }
.nav .sel { background: #ebeae8; box-shadow: inset 4px 0 #0c72d6; }
.nav .sel span { font-weight: 600; letter-spacing: 0; }
.nav .tall { height: 98px; }
.nav .tall span { width: 300px; line-height: 35px; letter-spacing: 0; }
.sidescroll { margin-top: 7px; width: 30px; background: #fafafa; border-left: 2px solid #e3e3e3; border-right: 2px solid #e3e3e3; padding: 124px 0 0 6px; }
.sidescroll i { width: 16px; height: 955px; border-radius: 8px; background: #c1c1c1; }

/* networking pane */
.pane { flex: 1; display: flex; flex-direction: column; min-width: 0; }
.pane-row { flex: 1; display: flex; min-height: 0; overflow: hidden; }
.content { flex: 1; padding: 0 41px 0 56px; overflow: hidden; }
.content a { letter-spacing: -.28px; }
.intro { margin-top: -23px; height: 32px; line-height: 32px; white-space: nowrap; letter-spacing: .02px; }
.intro a { margin-left: 12px; }
.fw-desc a { margin-left: 12px; }
.cmd { height: 40px; display: flex; align-items: center; padding-left: 17px; }
.cmd span { margin-left: 17px; margin-bottom: 2px; letter-spacing: .07px; }
.cmd svg:first-child { margin-bottom: 3px; }
.cmd .cv { margin: 4px 0 0 16px; color: #605e5c; }
.c1 { margin-top: 56px; }
.thead { margin-top: 14px; height: 72px; border-bottom: 2px solid #e8e8e8; display: grid; grid-template-columns: repeat(5, 359.200px) 1fr; align-items: center; padding: 0 0 2px 16px; font-weight: 600; letter-spacing: -.05px; }
.trow { height: 70px; border-bottom: 2px solid #c8c8c8; padding-left: 16px; line-height: 54px; }
h3 { font-weight: 700; font-size: 25.800px; letter-spacing: -.05px; height: 40px; line-height: 39px; }
.firewall { margin-top: 51px; }
.fw-desc { margin-top: 18px; line-height: 40px; white-space: nowrap; }
.c2 { margin-top: 52px; }
.iplabel { display: block; margin-top: 29px; line-height: 40px; padding-left: 32px; font-weight: 600; letter-spacing: .08px; }
.iprow { margin-top: 15px; height: 64px; background: #ebeae8; display: flex; align-items: center; padding-left: 16px; }
.input { width: 2090px; height: 49px; background: #fff; border: 2px solid #881798; border-radius: 4px; display: flex; align-items: center; justify-content: space-between; padding: 0 9px 0 17px; letter-spacing: -.25px; }
.trash { margin-left: 19px; }
.exception { margin-top: 52px; }
.ex-desc { margin-top: 19px; line-height: 40px; letter-spacing: -.03px; }
.check { margin-top: 34px; height: 40px; display: flex; align-items: center; gap: 16px; padding-left: 1px; }
.check span { margin-bottom: 3px; }
.check i { width: 37px; height: 36px; border: 2px solid #292827; border-radius: 4px; }
.info { margin-top: 42px; height: 40px; display: flex; align-items: center; white-space: nowrap; }
.info svg { margin-top: 3px; }
.info span { margin: 0 10px 3px; letter-spacing: .025px; }
.info a { margin-bottom: 3px; }
.actions { margin: 86px -21px 0 -37px; border-top: 2px solid #dedede; padding: 31px 0 0 31px; display: flex; gap: 40px; }
.actions button { font: 600 24.500px/38px "Open Sans", "Noto Sans", sans-serif; height: 48px; border-radius: 4px; padding: 0 0 1px; }
.apply { width: 160px; background: #1769c0; color: #fff; border: 4px solid #1769c0; box-shadow: inset 0 0 0 2px #fff; }
.discard { width: 276px; background: #fff; color: #323130; border: 2px solid #323130; }
.vscroll { width: 29px; background: #fafafa; border-left: 2px solid #e6e6e6; padding: 364px 0 0 5px; }
.vscroll i { width: 16px; height: 804px; border-radius: 8px; background: #c1c1c1; }
.hscroll { flex: none; height: 30px; background: #fafafa; border-top: 2px solid #e0e0e0; padding: 6px 0 0 6px; }
.hscroll i { width: 2281px; height: 16px; border-radius: 8px; background: #c1c1c1; }

/* dock */
.dock { position: absolute; left: 190px; top: 1694px; width: 2500px; height: 96px; border-radius: 32px; border: 2px solid rgba(255,255,255,.2); background: linear-gradient(100deg, #61547a 0%, #61547a 30%, #6a558f 55%, #6c5791 62%, #8c52a8 68%, #9050b2 74%, #6c538e 84%, #5f5284 100%); box-shadow: 0 0 70px rgba(0,0,0,.38); display: flex; padding: 13px 0 0 13px; }
.app { position: relative; flex: none; width: 60px; height: 60px; margin-right: 18px; border-radius: 14px; }
.app > svg { width: 60px; height: 60px; }
.run::after { content: ""; position: absolute; left: 26px; top: 69px; width: 8px; height: 8px; border-radius: 50%; background: #08001c; }
.siri { background: radial-gradient(circle at 52% 50%, #fff 0 6%, rgba(255,255,255,0) 26%), radial-gradient(circle at 30% 52%, #e0407a 0 10%, transparent 32%), radial-gradient(circle at 74% 58%, #2a9ae0 0 10%, transparent 32%), radial-gradient(circle, #2c5f70 0 56%, #4a8a94 58% 60%, transparent 62%), linear-gradient(90deg, #5a0f30, #1a1a38 45%, #0c4a48); }
.pad { background: #c6c3ce; display: grid; grid-template-columns: repeat(3, 11px); gap: 3.500px; padding: 10px; align-content: center; justify-content: center; grid-auto-rows: 11px; }
.pad i { border-radius: 3px; background: #5cd83c; }
.pad i:nth-child(2) { background: #fbb80c; }
.pad i:nth-child(3) { background: #f08a14; }
.pad i:nth-child(4) { background: #e01f28; }
.pad i:nth-child(5) { background: #9aa0a4; }
.pad i:nth-child(6) { background: #fa2f5c; }
.pad i:nth-child(7) { background: #a032d0; }
.pad i:nth-child(8) { background: #1e90f5; }
.pad i:nth-child(9) { background: #30c09a; }
.mail { background: linear-gradient(#2068f0, #25b8fb); }
.cal { background: #fafafa; text-align: center; }
.cal b { display: block; height: 19px; border-radius: 14px 14px 0 0; background: #f54a4a; color: #fff; font: 600 12px/20px Inter; }
.cal span { display: block; font: 300 34px/38px Inter; color: #222; }
.notes { background: linear-gradient(#fdd23a 0, #fbc808 15px, #b9b6ae 15px, #f6f5f1 17px 29px, #d9d8d2 30px, #f1f0ec 31px 44px, #d5d4ce 45px, #e8e7e1 46px); }
.rem { background: #fcfcfc; }
.photos { background: #fff; }
.green { background: linear-gradient(#5ff26c, #29c332); }
.green2 { background: linear-gradient(#78f05c, #2bd420); }
.pages { background: linear-gradient(#ffb02e, #fb8620); }
.keynote { background: linear-gradient(#2fc0fb, #1c5cf0); }
.music { background: linear-gradient(#fb5370, #f8052f); }
.pod { background: linear-gradient(#c44ff0, #7600b4); }
.tv { background: linear-gradient(#273331, #0b0e11); color: #fff; display: flex; align-items: center; padding-left: 8px; }
.app.tv > svg { width: 18px; height: 22px; margin-bottom: 4px; }
.tv span { font: 500 26px/30px Inter; letter-spacing: -.5px; margin-left: 1px; }
.books { background: linear-gradient(#fd9c10, #fa6f1e); }
.store { background: linear-gradient(#22b2f5, #1a5ce4); }
.prefs { background: linear-gradient(#cfe0ea, #8f8f8f); }
.sep { flex: none; width: 2px; height: 72px; margin-top: -3px; background: rgba(50,10,90,.75); }
.s1 { margin-left: 9px; margin-right: 25px; }
.s2 { margin-left: 6px; margin-right: 21px; }
.discord { background: linear-gradient(#7083f5, #5755f0); }
.tg { background: linear-gradient(#38aaec, #2485d6); }
.tg em { position: absolute; right: -10px; top: -8px; width: 33px; height: 29px; border-radius: 15px; background: #f5303a; color: #fff; text-align: center; font: 500 16px/28px Inter; }
.chrome, .vs { background: #fff; }
.sublime { background: #484848; }
.mini { position: relative; width: 70px; height: 60px; padding-top: 9px; margin-right: 8px; }
.mini > svg { width: 70px; height: 46px; }
.cal17 { position: absolute; left: 46px; top: 41px; width: 23px; height: 22px; border-radius: 5px; background: #fafafa; text-align: center; }
.cal17 b { display: block; height: 7px; border-radius: 5px 5px 0 0; background: #f54a4a; color: #fff; font: 600 5px/7px Inter; }
.cal17 span { display: block; font: 400 13px/15px Inter; color: #222; }
.mini .mini-act { position: absolute; left: 46px; top: 41px; width: 22px; height: 22px; }
.bin { width: 54px; height: 70px; margin: -6px 0 0 8px; }
```
